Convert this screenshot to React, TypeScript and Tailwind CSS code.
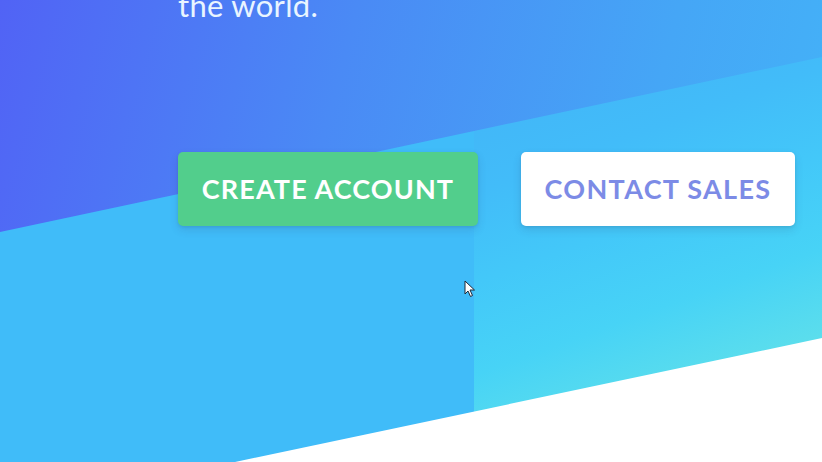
import React from "react";

function Cursor() {
  return (
    <svg
      width="12"
      height="18"
      viewBox="0 0 12 18"
      className="absolute left-[464px] top-[280px]"
    >
      <path
        d="M1 1 L1 14 L4 11 L6.5 16.5 L8.5 15.5 L6 10 L10.5 10 Z"
        fill="#ffffff"
        stroke="#1f2937"
        strokeWidth="1"
        strokeLinejoin="round"
      />
    </svg>
  );
}

export default function App() {
  return (
    <div className="relative h-[462px] w-full overflow-hidden bg-[linear-gradient(105deg,#5163f5_0%,#4a8af5_38%,#45a6f6_72%,#43b6f8_100%)] font-['Lato',sans-serif]">
      {/* Inicio stripes */}
      <div className="absolute inset-0 bg-[#40bcf9] [clip-path:polygon(0px_232px,474px_131px,474px_462px,0px_462px)]" />
      <div className="absolute inset-0 bg-[linear-gradient(160deg,#42b8f8_40%,#42bcf9_48%,#43c8f9_60%,#47d3f6_72%,#5cdeec_84%,#74e9db_100%)] [clip-path:polygon(474px_131px,822px_57px,822px_462px,474px_462px)]" />
      <div className="absolute inset-0 bg-white [clip-path:polygon(235px_462px,822px_338px,822px_462px)]" />
      {/* Fin stripes */}

      <div className="relative pl-[178px]">
        <h1 className="-mt-[13px] text-[31px] font-normal leading-[36px] tracking-[0.3px] text-[#e9f5ff]">
          the world.
        </h1>
        <div className="mt-[129px] flex gap-[43px]">
          <a
            href="#"
            className="flex h-[74px] w-[300px] items-center justify-center rounded-[5px] bg-[#52ce8c] text-[27px] font-bold uppercase tracking-[1.1px] text-white shadow-[0_4px_8px_rgba(50,50,93,0.14),0_1px_3px_rgba(0,0,0,0.08)]"
          >
            Create Account
          </a>
          <a
            href="#"
            className="flex h-[74px] w-[274px] items-center justify-center rounded-[5px] bg-white text-[27px] font-bold uppercase tracking-[1.3px] text-[#7c8be6] shadow-[0_4px_8px_rgba(50,50,93,0.14),0_1px_3px_rgba(0,0,0,0.08)]"
          >
            Contact Sales
          </a>
        </div>
      </div>

      <Cursor />
    </div>
  );
}
